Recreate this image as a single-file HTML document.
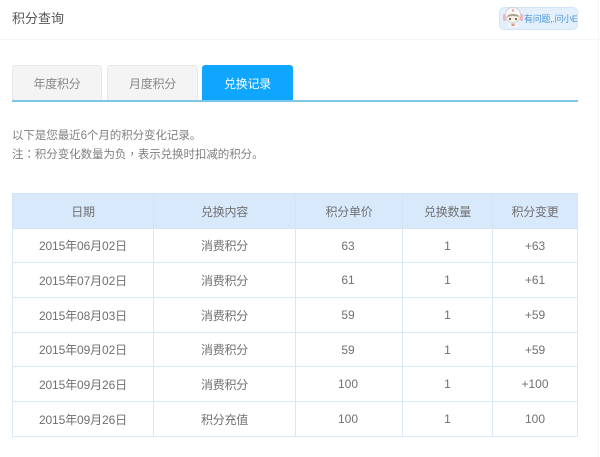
<!DOCTYPE html>
<html lang="zh-CN"><head><meta charset="utf-8">
<style>
html,body{margin:0;padding:0;background:#fff;width:600px;height:457px;overflow:hidden}
body{position:relative;font-family:"Liberation Sans","Noto Sans CJK SC",sans-serif;color:#666;font-size:12px}
.a{position:absolute;white-space:nowrap}
.tab{position:absolute;top:65px;height:35px;box-sizing:border-box;border:1px solid #e8e8e8;border-bottom:none;border-radius:3px 3px 0 0;background:#f4f4f4;text-align:center;line-height:36px;font-size:12px;letter-spacing:-.25px;color:#888}
.p{font-family:"Noto Sans CJK TC",sans-serif}
table{position:absolute;left:12px;top:193px;border-collapse:collapse;table-layout:fixed;width:565px}
td,th{border:1px solid #d8e8f7;text-align:center;font-weight:normal;padding:0;height:34px;font-size:12px;letter-spacing:-.25px;color:#707070;box-sizing:border-box}
td.d{letter-spacing:-.12px}
td.n{letter-spacing:0}
td.m{padding-right:2px}
th{background:#d9e9fc;border-color:#d3e4f7;color:#707070}
</style></head><body>
<div class="a" style="left:12px;top:9px;font-size:13px;line-height:20px;color:#555">积分查询</div>
<div class="a" style="left:0;top:39px;width:600px;height:1px;background:#f5f5f5"></div>
<div class="a" style="left:499px;top:7px;width:79px;height:23px;box-sizing:border-box;background:#e3f0fc;border:1px solid #d2e6f9;border-radius:5px;overflow:hidden">
<div class="a" style="left:24px;top:5px;font-size:9px;letter-spacing:-.3px;line-height:13px;color:#4a94d4">有问题,.问小E</div>
</div>
<svg class="a" style="left:502px;top:7px" width="22" height="21" viewBox="0 0 22 21">
<rect x="1" y="7" width="3" height="7" rx="1.500" fill="#f0b4c0"/><rect x="18" y="7" width="3" height="7" rx="1.500" fill="#f0b4c0"/>
<circle cx="11" cy="8" r="7.600" fill="#faf8f6" stroke="#c8c4bc" stroke-width=".6"/>
<path d="M5 9c2-2 10-2 12 0v3c-2 3-10 3-12 0z" fill="#fbeee4"/>
<path d="M4.500 11c0-3 3-4 6.500-4s6.500 1 6.500 4l-1.500-1.500c-2 0-3-.5-5-.5s-3 .5-5 .5z" fill="#a8a28e"/>
<circle cx="8" cy="12" r="1.100" fill="#66665e"/><circle cx="14" cy="12" r="1.100" fill="#66665e"/>
<circle cx="11" cy="3.500" r="1.200" fill="#ee98a6"/>
<path d="M7 16h8l1.500 4h-11z" fill="#f6f4f2"/><path d="M9.500 16.500h3v2.500h-3z" fill="#e49490"/>
</svg>
<div class="tab" style="left:12px;width:90px">年度积分</div>
<div class="tab" style="left:107px;width:91px">月度积分</div>
<div class="tab" style="left:202px;width:91px;background:#0ea6ff;border-color:#0ea6ff;color:#fff">兑换记录</div>
<div class="a" style="left:12px;top:100px;width:566px;height:2px;background:#7cc6ee"></div>
<div class="a" style="left:12px;top:127px;font-size:11.5px;line-height:18px;color:#808080;letter-spacing:-.07px">以下是您最近6个月的积分变化记录。<br>注<span class="p" lang="zh-TW">：</span>积分变化数量为负<span class="p" lang="zh-TW">，</span>表示兑换时扣减的积分。</div>
<table>
<colgroup><col style="width:141px"><col style="width:142px"><col style="width:107px"><col style="width:90px"><col style="width:85px"></colgroup>
<tr style="height:35px"><th style="height:35px">日期</th><th style="height:35px">兑换内容</th><th style="height:35px">积分单价</th><th style="height:35px">兑换数量</th><th style="height:35px">积分变更</th></tr>
<tr><td class="d">2015年06月02日</td><td>消费积分</td><td class="n m">63</td><td class="n">1</td><td class="n">+63</td></tr>
<tr style="height:35px"><td class="d" style="height:35px">2015年07月02日</td><td>消费积分</td><td class="n m">61</td><td class="n">1</td><td class="n">+61</td></tr>
<tr style="height:35px"><td class="d" style="height:35px">2015年08月03日</td><td>消费积分</td><td class="n m">59</td><td class="n">1</td><td class="n">+59</td></tr>
<tr><td class="d">2015年09月02日</td><td>消费积分</td><td class="n m">59</td><td class="n">1</td><td class="n">+59</td></tr>
<tr style="height:35px"><td class="d" style="height:35px">2015年09月26日</td><td>消费积分</td><td class="n m">100</td><td class="n">1</td><td class="n">+100</td></tr>
<tr style="height:35px"><td class="d" style="height:35px">2015年09月26日</td><td>积分充值</td><td class="n m">100</td><td class="n">1</td><td class="n">100</td></tr>
</table>
<div class="a" style="left:598px;top:0;width:1px;height:457px;background:#f6f6f6"></div>
</body></html>
